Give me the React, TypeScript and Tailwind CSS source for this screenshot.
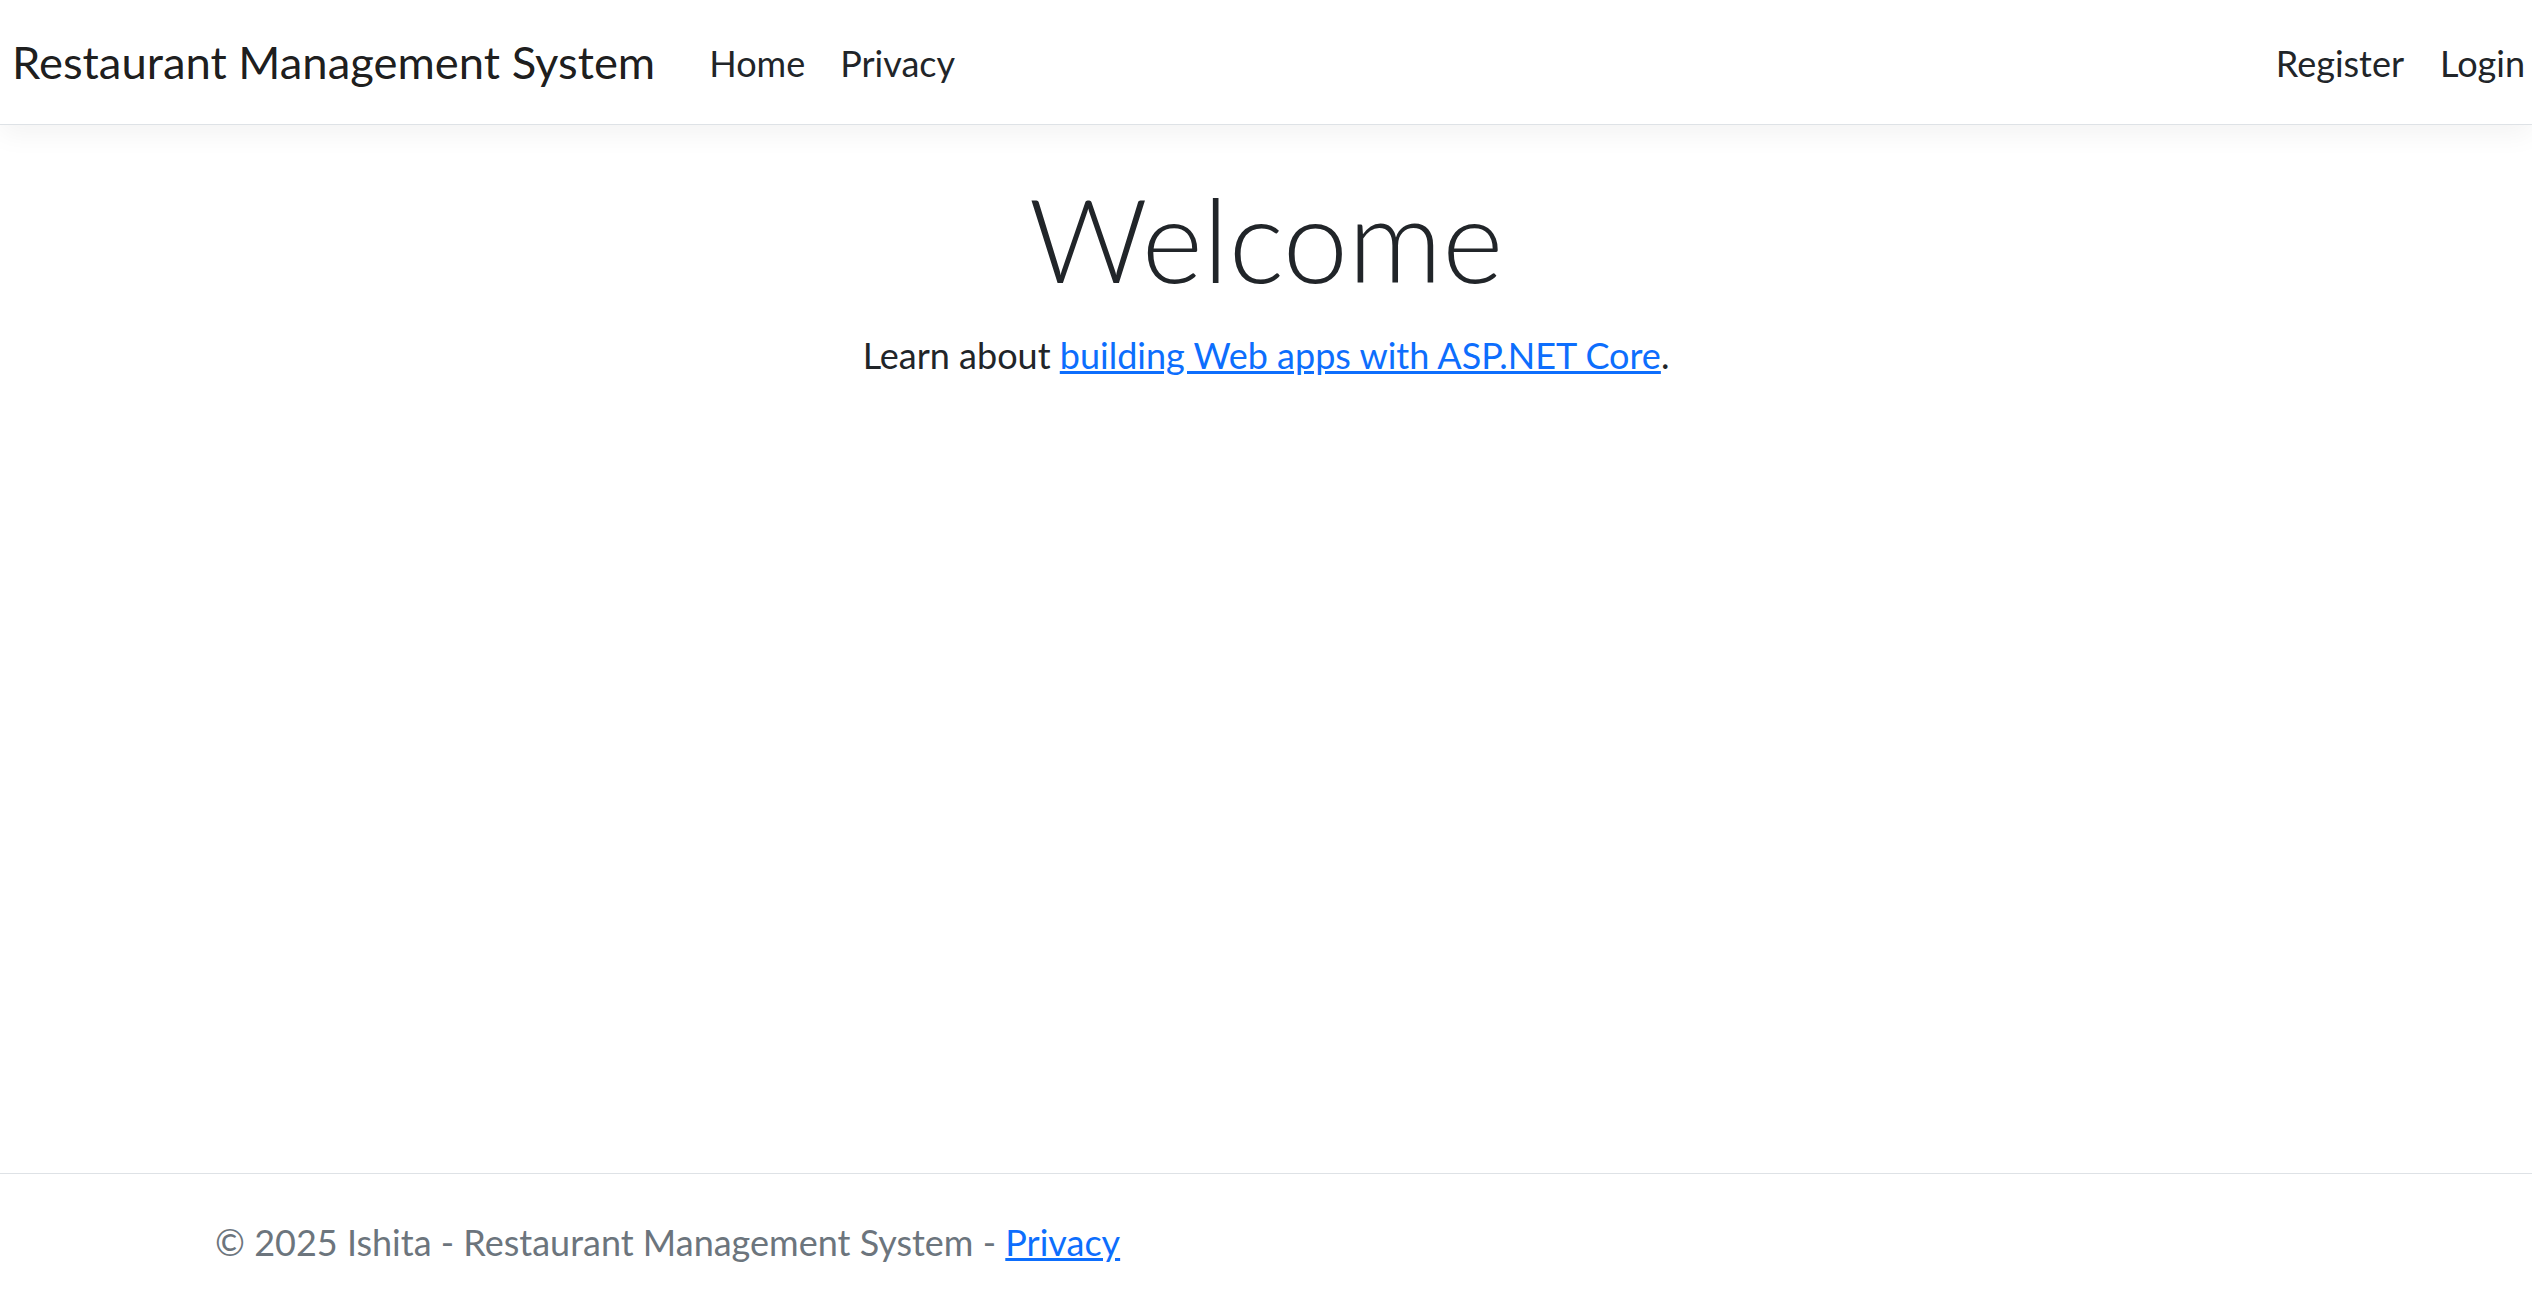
export default function App() {
  return (
    <div className="h-screen overflow-hidden bg-white font-['Lato',sans-serif] text-[#212529]">
      <header className="relative z-10 flex h-[125px] items-center border-b border-[#dee2e6] bg-white pl-[12px] pr-[7px] shadow-[0_9px_26px_rgba(0,0,0,0.05)]">
        <a href="#" className="mt-[1px] text-[45.4px] leading-[1.5] text-black/90">
          Restaurant Management System
        </a>
        <nav className="ml-[54px] mt-[2px] flex gap-[35px] text-[36px] leading-[1.5] text-[#212529]">
          <a href="#">Home</a>
          <a href="#">Privacy</a>
        </nav>
        <nav className="ml-auto mt-[2px] flex gap-[36px] text-[36px] leading-[1.5] text-[#212529]">
          <a href="#">Register</a>
          <a href="#">Login</a>
        </nav>
      </header>

      <main className="h-[1048px] pt-[43px] text-center">
        <h1 className="text-[117px] font-light leading-[1.2]">Welcome</h1>
        <p className="mt-[20px] text-[36px] leading-[1.5]">
          Learn about{" "}
          <a href="#" className="text-[#0d6efd] underline">
            building Web apps with ASP.NET Core
          </a>
          .
        </p>
      </main>

      <footer className="border-t border-[#dee2e6] pl-[215px] text-[36px] leading-[137px] text-[#6c757d]">
        © 2025 Ishita - Restaurant Management System -{" "}
        <a href="#" className="text-[#0d6efd] underline">
          Privacy
        </a>
      </footer>
    </div>
  );
}
